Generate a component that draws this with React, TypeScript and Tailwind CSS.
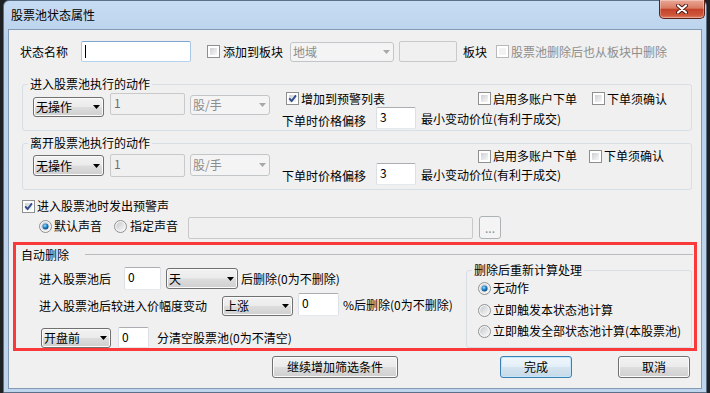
import React from 'react';

const CheckBox: React.FC<{ checked?: boolean; disabled?: boolean }> = ({ checked = false, disabled = false }) => (
    <span className={`relative block w-[13px] h-[13px] shrink-0 border bg-white ${disabled ? 'border-[#b8b8b8]' : 'border-[#8e8f8f]'}`}>
        <span className={`absolute inset-[2px] ${disabled ? 'bg-[#f2f2f2]' : 'bg-[linear-gradient(135deg,#cdd0d4,#f7f7f7)]'}`} />
        {checked && (
            <svg className="absolute left-0 top-0" width="11" height="11" viewBox="0 0 11 11">
                <path d="M2.2 5.4 L4.6 8 L9 2.4" fill="none" stroke="#2e4d8e" strokeWidth="1.9" />
            </svg>
        )}
    </span>
);

const Radio: React.FC<{ checked?: boolean }> = ({ checked = false }) => (
    <svg width="13" height="13" viewBox="0 0 13 13" className="shrink-0">
        <defs>
            <linearGradient id="rbg" x1="0" y1="0" x2="1" y2="1">
                <stop offset="0" stopColor="#c6c9ce" />
                <stop offset="1" stopColor="#f9f9f9" />
            </linearGradient>
            <radialGradient id="rdot" cx="0.4" cy="0.35" r="0.75">
                <stop offset="0" stopColor="#9ddcff" />
                <stop offset="0.5" stopColor="#1b7cc2" />
                <stop offset="1" stopColor="#0b3a6c" />
            </radialGradient>
        </defs>
        <circle cx="6.5" cy="6.5" r="6" fill="#f5f5f5" stroke="#8e8f8f" />
        <circle cx="6.5" cy="6.5" r="4.4" fill="url(#rbg)" />
        {checked && <circle cx="6.5" cy="6.5" r="3" fill="url(#rdot)" />}
    </svg>
);

const Select: React.FC<{ value: string; disabled?: boolean; className?: string }> = ({ value, disabled = false, className = '' }) => (
    <div
        className={`flex items-center justify-between shrink-0 rounded-[3px] border pl-[2px] pr-[3px] whitespace-nowrap
            ${disabled
                ? 'border-[#c3c6c9] bg-[#f4f4f4] text-[#8d8d8d]'
                : 'border-[#707070] bg-[linear-gradient(#f2f2f2,#ebebeb_48%,#dddddd_52%,#cfcfcf)] shadow-[inset_0_0_0_1px_#fbfbfb]'} ${className}`}
    >
        <span>{value}</span>
        <svg width="7" height="4" viewBox="0 0 7 4">
            <path d="M0 0h7L3.5 4z" fill={disabled ? '#a8a8a8' : '#000'} />
        </svg>
    </div>
);

const TextInput: React.FC<{ value?: string; disabled?: boolean; caret?: boolean; className?: string }> = ({ value = '', disabled = false, caret = false, className = '' }) => (
    <div
        className={`shrink-0 rounded-[2px] border pl-[3px] pt-[1px] whitespace-nowrap
            ${disabled
                ? 'border-[#c9c9c9] bg-[#f0f0f0] text-[#6d6d6d]'
                : caret
                    ? 'border-[#7ea6d1] border-x-[#a9c6e4] border-b-[#b7d2ec] bg-white'
                    : 'border-[#abadb3] border-x-[#dbdfe6] border-b-[#e3e9ef] bg-white'} ${className}`}
    >
        {caret ? <span className="block w-px h-[13px] bg-black mt-[2px]" /> : value}
    </div>
);

const Button: React.FC<{ children: React.ReactNode; primary?: boolean; disabled?: boolean; className?: string }> = ({ children, primary = false, disabled = false, className = '' }) => (
    <div
        className={`flex items-center justify-center shrink-0 rounded-[3px] border
            ${disabled
                ? 'border-[#adb2b5] bg-[#f4f4f4] text-[#8d8d8d]'
                : primary
                    ? 'border-[#3c7fb1] bg-[linear-gradient(#f0f7fc,#e3eff8_48%,#d4e4f0_52%,#c6d9e8)] shadow-[inset_0_0_0_1px_#c2e6fa]'
                    : 'border-[#707070] bg-[linear-gradient(#f2f2f2,#ebebeb_48%,#dddddd_52%,#cfcfcf)] shadow-[inset_0_0_0_1px_#fcfcfc]'} ${className}`}
    >
        {children}
    </div>
);

const Group: React.FC<{ title: string; className?: string; children: React.ReactNode }> = ({ title, className = '', children }) => (
    <fieldset className={`shrink-0 rounded-[3px] border border-[#d5dfe5] ${className}`}>
        <legend className="ml-[5px] px-[2px] leading-[16px]">{title}</legend>
        {children}
    </fieldset>
);

const Check: React.FC<{ label: string; checked?: boolean; disabled?: boolean; className?: string }> = ({ label, checked, disabled, className = '' }) => (
    <div className={`flex items-center shrink-0 ${className}`}>
        <CheckBox checked={checked} disabled={disabled} />
        <span className={`ml-[2px] whitespace-nowrap ${disabled ? 'text-[#8d8d8d]' : ''}`}>{label}</span>
    </div>
);

const ActionGroup: React.FC<{ title: string; enter: boolean }> = ({ title, enter }) => (
    <Group title={title} className={`ml-[13px] w-[670px] h-[55px] ${enter ? 'mt-[14px]' : 'mt-[4px]'}`}>
        <div className="flex items-start">
            <Select value="无操作" className={`ml-[10px] w-[71px] ${enter ? 'mt-[5px] h-[20px]' : 'mt-[4px] h-[21px]'}`} />
            <TextInput value="1" disabled className={`ml-[6px] w-[75px] ${enter ? 'mt-[1px] h-[22px]' : 'mt-[3px] h-[23px]'}`} />
            <Select value="股/手" disabled className={`ml-[5px] w-[80px] ${enter ? 'mt-[3px] h-[20px]' : 'mt-[3px] h-[22px]'}`} />
            <div className="ml-[12px] flex flex-col">
                {enter ? (
                    <div className="flex items-center h-[13px]">
                        <Check label="增加到预警列表" checked className="ml-[4px] w-[192px]" />
                        <Check label="启用多账户下单" className="w-[114px]" />
                        <Check label="下单须确认" />
                    </div>
                ) : (
                    <div className="flex items-center h-[10px]">
                        <Check label="启用多账户下单" className="ml-[196px] w-[111px]" />
                        <Check label="下单须确认" />
                    </div>
                )}
                <div className="flex items-start">
                    <span className={`w-[94px] whitespace-nowrap ${enter ? 'mt-[8px]' : 'mt-[7px]'}`}>下单时价格偏移</span>
                    <TextInput value="3" className="mt-[2px] w-[40px] h-[22px]" />
                    <span className="ml-[5px] mt-[6px] whitespace-nowrap">最小变动价位(有利于成交)</span>
                </div>
            </div>
        </div>
    </Group>
);

const App: React.FC = () => {
    return (
        <div className="w-[710px] h-[393px] bg-[#1f2225] flex overflow-hidden font-['Noto_Sans_CJK_SC','Noto_Sans',sans-serif] text-[12px] leading-[16px] text-black">
            <div className="ml-[3px] w-[704px] h-[393px] flex flex-col rounded-t-[6px] border border-[#5d708a] bg-[linear-gradient(#c6dcf3,#b9d1eb_40px,#bfd5ee)]">
                {/* title bar */}
                <div className="h-[28px] flex items-start justify-between pl-[7px] pr-[1px]">
                    <span className="mt-[6px]">股票池状态属性</span>
                    <div className="-mt-px w-[46px] h-[19px] flex items-center justify-center rounded-b-[5px] border border-t-0 border-[#5e2118] bg-[linear-gradient(#eaa797,#d97b63_45%,#c4432a_52%,#cf563b_85%,#e0866b)] shadow-[inset_0_0_0_1px_rgba(255,255,255,0.3)]">
                        <svg width="12" height="10" viewBox="0 0 12 10">
                            <path d="M2 1.5 L10 8.5 M10 1.5 L2 8.5" stroke="#4b1710" strokeWidth="4" strokeLinecap="round" />
                            <path d="M2 1.5 L10 8.5 M10 1.5 L2 8.5" stroke="#ffffff" strokeWidth="2.2" strokeLinecap="round" />
                        </svg>
                    </div>
                </div>

                {/* client area */}
                <div className="mx-[4px] h-[360px] border border-[#8399b4] bg-[#f0f0f0] flex flex-col">
                    {/* name row */}
                    <div className="mt-[11px] h-[21px] flex items-center">
                        <span className="ml-[11px] w-[61px] shrink-0">状态名称</span>
                        <TextInput caret className="w-[110px] h-[21px]" />
                        <div className="ml-[16px] flex items-center">
                            <CheckBox />
                            <span className="ml-[3px] w-[67px] shrink-0 whitespace-nowrap">添加到板块</span>
                        </div>
                        <Select value="地域" disabled className="w-[104px] h-[20px]" />
                        <TextInput disabled className="ml-[5px] w-[58px] h-[21px]" />
                        <span className="ml-[6px] w-[33px] shrink-0">板块</span>
                        <Check label="股票池删除后也从板块中删除" disabled />
                    </div>

                    <ActionGroup title="进入股票池执行的动作" enter />
                    <ActionGroup title="离开股票池执行的动作" enter={false} />

                    {/* alert sound */}
                    <div className="mt-[8px] h-[16px] flex items-center">
                        <Check label="进入股票池时发出预警声" checked className="ml-[13px]" />
                    </div>
                    <div className="mt-[2px] h-[23px] flex items-start">
                        <div className="ml-[30px] mt-[2px] h-[16px] flex items-center">
                            <Radio checked />
                            <span className="ml-[2px] w-[60px] shrink-0">默认声音</span>
                            <Radio />
                            <span className="ml-[3px] w-[58px] shrink-0">指定声音</span>
                        </div>
                        <TextInput disabled className="mt-[1px] w-[285px] h-[22px]" />
                        <Button disabled className="ml-[6px] w-[22px] h-[23px] items-end pb-[2px]">...</Button>
                    </div>

                    {/* auto delete (highlighted) */}
                    <div className="mt-[3px] ml-[4px] w-[684px] h-[109px] border-[3px] border-[#fa3a3a] flex flex-col">
                        <div className="mt-[2px] h-[15px] flex items-center">
                            <span className="ml-[5px] shrink-0">自动删除</span>
                            <div className="ml-[16px] mr-[1px] flex-1 h-px bg-[#b9bcbf]" />
                        </div>
                        <div className="flex items-start">
                            <div className="w-[450px] flex flex-col">
                                <div className="mt-[5px] h-[23px] flex items-center">
                                    <span className="ml-[23px] w-[85px] shrink-0">进入股票池后</span>
                                    <TextInput value="0" className="w-[37px] h-[23px]" />
                                    <Select value="天" className="ml-[5px] w-[72px] h-[21px]" />
                                    <span className="ml-[3px] whitespace-nowrap">后删除(0为不删除)</span>
                                </div>
                                <div className="mt-[3px] h-[23px] flex items-center">
                                    <span className="ml-[23px] w-[183px] shrink-0 pt-[3px]">进入股票池后较进入价幅度变动</span>
                                    <Select value="上涨" className="w-[71px] h-[20px] self-end" />
                                    <TextInput value="0" className="ml-[5px] w-[41px] h-[23px]" />
                                    <span className="ml-[4px] whitespace-nowrap">%后删除(0为不删除)</span>
                                </div>
                                <div className="mt-[11px] h-[21px] flex items-center">
                                    <Select value="开盘前" className="ml-[25px] w-[70px] h-[20px]" />
                                    <TextInput value="0" className="ml-[7px] w-[31px] h-[21px]" />
                                    <span className="ml-[8px] whitespace-nowrap">分清空股票池(0为不清空)</span>
                                </div>
                            </div>
                            <Group title="删除后重新计算处理" className="w-[226px] h-[86px]">
                                <div className="pl-[11px] flex flex-col">
                                    <div className="mt-[2px] h-[16px] flex items-center">
                                        <Radio checked />
                                        <span className="ml-[2px]">无动作</span>
                                    </div>
                                    <div className="mt-[6px] h-[16px] flex items-center">
                                        <Radio />
                                        <span className="ml-[2px]">立即触发本状态池计算</span>
                                    </div>
                                    <div className="mt-[5px] h-[16px] flex items-center">
                                        <Radio />
                                        <span className="ml-[2px] whitespace-nowrap">立即触发全部状态池计算(本股票池)</span>
                                    </div>
                                </div>
                            </Group>
                        </div>
                    </div>

                    {/* buttons */}
                    <div className="mt-[5px] h-[22px] flex">
                        <Button className="ml-[263px] w-[126px] h-[22px]">继续增加筛选条件</Button>
                        <Button primary className="ml-[102px] w-[72px] h-[22px]">完成</Button>
                        <Button className="ml-[46px] w-[72px] h-[22px]">取消</Button>
                    </div>
                </div>
            </div>
        </div>
    );
};

export default App;
